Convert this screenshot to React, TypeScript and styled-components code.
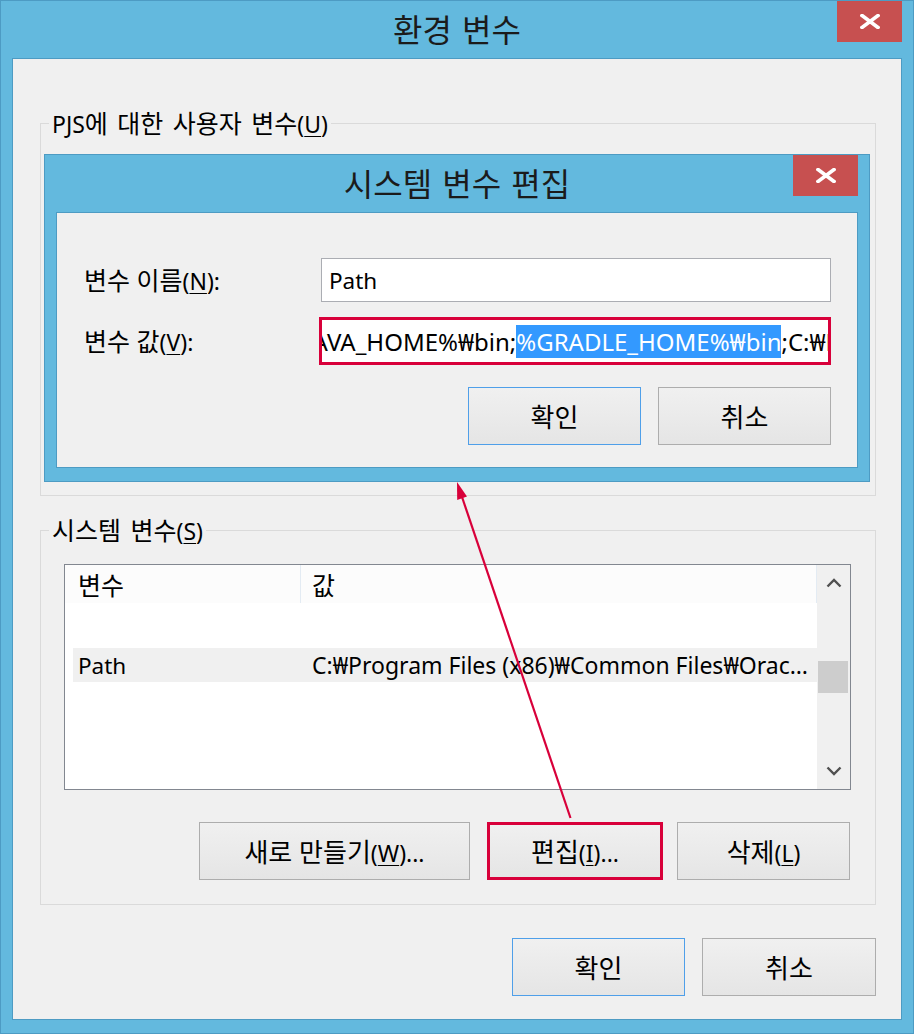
import React from "react";
import styled, { createGlobalStyle } from "styled-components";

const FONT = `"Noto Sans", "Noto Sans CJK KR", sans-serif`;
const BLUE = "#63b9de";
const EDGE = "#4d9bc3";
const RED = "#d8003a";

const GlobalStyle = createGlobalStyle`
  html, body { margin: 0; padding: 0; background: ${BLUE}; }
  body { font-family: ${FONT}; }
  *, *::before, *::after { box-sizing: border-box; }
`;

const Frame = styled.div<{ $w?: number; $h?: number }>`
  position: relative;
  display: flex;
  flex-direction: column;
  width: ${(p) => (p.$w ? `${p.$w}px` : "100%")};
  height: ${(p) => (p.$h ? `${p.$h}px` : "auto")};
  background: ${BLUE};
  border: 1px solid ${EDGE};
  font-family: ${FONT};
  color: #000;
`;

const FrameHeader = styled.div`
  flex: none;
  display: grid;
  grid-template-columns: 1fr auto 1fr;
  align-items: start;
  height: 57px;
`;

const FrameTitle = styled.div`
  grid-column: 2;
  align-self: center;
  margin-top: -4px;
  font-family: "Noto Sans CJK KR", sans-serif;
  font-size: 32px;
  line-height: 36px;
  word-spacing: 3px;
  color: #1b1b1b;
  white-space: nowrap;
`;

const CloseButton = styled.button<{ $right: number }>`
  grid-column: 3;
  justify-self: end;
  width: 65px;
  height: 41px;
  margin: 0 ${(p) => p.$right}px 0 0;
  padding: 0;
  border: none;
  background: #c75050;
  display: flex;
  align-items: center;
  justify-content: center;
`;

const FrameBody = styled.div<{ $side: number; $pad: string }>`
  flex: 1;
  margin: 0 ${(p) => p.$side}px 13px;
  border: 1px solid ${EDGE};
  background: #f0f0f0;
  padding: ${(p) => p.$pad};
  display: flex;
  flex-direction: column;
`;

const Group = styled.fieldset<{ $top?: number }>`
  margin: ${(p) => p.$top ?? 0}px 0 0;
  padding: 0;
  min-width: 0;
  border: 1px solid #dadada;
`;

const Legend = styled.legend`
  height: 24px;
  margin-left: 8px;
  padding: 0 3px;
  font-size: 25px;
  line-height: 24px;
  word-spacing: 3px;
  color: #000;
  white-space: nowrap;
`;

const Latin = styled.span<{ $size?: number }>`
  font-size: ${(p) => p.$size ?? 23}px;
`;

const GroupInner = styled.div<{ $pad: string }>`
  padding: ${(p) => p.$pad};
  display: flex;
  flex-direction: column;
`;

const Key = styled.span`
  text-decoration: underline;
  text-underline-offset: 3px;
  text-decoration-thickness: 1px;
`;

const FormGrid = styled.div`
  display: grid;
  grid-template-columns: 235px 1fr;
  grid-template-rows: 44px 48px;
  row-gap: 15px;
  align-items: center;
`;

const FieldLabel = styled.label`
  font-size: 25px;
  line-height: 28px;
  padding-top: 1px;
  white-space: nowrap;
`;

const NameInput = styled.div`
  height: 44px;
  margin-left: 2px;
  border: 1px solid #abadb3;
  background: #fff;
  padding-left: 7px;
  display: flex;
  align-items: center;
  font-size: 22.5px;
`;

const ValueInput = styled.div`
  height: 48px;
  border: 3px solid ${RED};
  background: #fff;
  overflow: hidden;
  display: flex;
  align-items: center;
  font-size: 24px;
  white-space: nowrap;
`;

const ValueText = styled.div<{ $shift: number }>`
  margin-left: ${(p) => p.$shift}px;
  flex: none;
`;

const Selected = styled.span`
  background: #3399ff;
  color: #fff;
`;

const ButtonRow = styled.div<{ $top: number; $right?: number }>`
  display: flex;
  justify-content: flex-end;
  margin-top: ${(p) => p.$top}px;
  padding-right: ${(p) => p.$right ?? 0}px;
`;

const Button = styled.button<{ $w: number; $ml?: number; $kind?: "default" | "marked" }>`
  width: ${(p) => p.$w}px;
  height: 58px;
  margin-left: ${(p) => p.$ml ?? 0}px;
  padding: 0;
  font-family: ${FONT};
  font-size: 26px;
  color: #000;
  background: linear-gradient(#f0f0f0, #e5e5e5);
  border: ${(p) =>
    p.$kind === "marked"
      ? `3px solid ${RED}`
      : p.$kind === "default"
      ? "1px solid #4f9fe9"
      : "1px solid #adadad"};
  white-space: nowrap;
`;

const ListBox = styled.div`
  height: 226px;
  border: 1px solid #828790;
  background: #fff;
  display: grid;
  grid-template-columns: 1fr 33px;
`;

const ListMain = styled.div`
  display: flex;
  flex-direction: column;
  overflow: hidden;
`;

const ListHeader = styled.div`
  display: grid;
  grid-template-columns: 235px 1fr;
  height: 38px;
  background: #fcfcfc;
  border-right: 1px solid #e3ebf3;
`;

const HeaderCell = styled.div<{ $pad: number; $divider?: boolean }>`
  display: flex;
  align-items: center;
  padding-left: ${(p) => p.$pad}px;
  border-left: ${(p) => (p.$divider ? "1px solid #e3ebf3" : "none")};
  font-size: 25px;
`;

const ListRow = styled.div`
  display: grid;
  grid-template-columns: 227px 1fr;
  height: 34px;
  margin: 45px 0 0 8px;
  background: #f0f0f0;
  align-items: center;
`;

const RowCell = styled.div<{ $pad: number; $size: number }>`
  padding-left: ${(p) => p.$pad}px;
  font-size: ${(p) => p.$size}px;
  white-space: nowrap;
  overflow: hidden;
`;

const ScrollBar = styled.div`
  background: #f0f0f0;
  display: flex;
  flex-direction: column;
`;

const ScrollArrow = styled.div`
  height: 36px;
  display: flex;
  align-items: center;
  justify-content: center;
`;

const ScrollTrack = styled.div`
  flex: 1;
`;

const Thumb = styled.div`
  height: 32px;
  margin: 60px 2px 0 1px;
  background: #cdcdcd;
`;

const ArrowLayer = styled.svg`
  position: absolute;
  top: -1px;
  left: -1px;
  pointer-events: none;
`;

const CloseX = () => (
  <svg width="20" height="15" viewBox="0 0 20 15">
    <path d="M2 1.5 L18 13.5 M18 1.5 L2 13.5" stroke="#fff" strokeWidth="3.6" strokeLinecap="square" />
  </svg>
);

const Chevron = ({ up }: { up: boolean }) => (
  <svg width="16" height="10" viewBox="0 0 16 10">
    <path
      d={up ? "M1.5 8.5 L8 2 L14.5 8.5" : "M1.5 1.5 L8 8 L14.5 1.5"}
      fill="none"
      stroke="#505050"
      strokeWidth="2.4"
    />
  </svg>
);

export default function App() {
  return (
    <>
      <GlobalStyle />
      <Frame $w={914} $h={1034}>
        <FrameHeader>
          <FrameTitle>환경 변수</FrameTitle>
          <CloseButton $right={11} aria-label="닫기">
            <CloseX />
          </CloseButton>
        </FrameHeader>
        <FrameBody $side={11} $pad="52px 25px 0 27px">
          <Group>
            <Legend>
              <Latin>PJS</Latin>에 대한 사용자 변수
              <Latin>
                (<Key>U</Key>)
              </Latin>
            </Legend>
            <GroupInner $pad="19px 5px 13px 3px">
              <Frame>
                <FrameHeader>
                  <FrameTitle>시스템 변수 편집</FrameTitle>
                  <CloseButton $right={11} aria-label="닫기">
                    <CloseX />
                  </CloseButton>
                </FrameHeader>
                <FrameBody $side={11} $pad="45px 26px 22px 27px">
                  <FormGrid>
                    <FieldLabel>
                      변수 이름
                      <Latin>
                        (<Key>N</Key>):
                      </Latin>
                    </FieldLabel>
                    <NameInput>Path</NameInput>
                    <FieldLabel>
                      변수 값
                      <Latin>
                        (<Key>V</Key>):
                      </Latin>
                    </FieldLabel>
                    <ValueInput>
                      <ValueText $shift={-16}>
                        JAVA_HOME%₩bin;
                        <Selected>%GRADLE_HOME%₩bin</Selected>
                        ;C:₩P
                      </ValueText>
                    </ValueInput>
                  </FormGrid>
                  <ButtonRow $top={22}>
                    <Button $w={173} $kind="default">확인</Button>
                    <Button $w={173} $ml={17}>취소</Button>
                  </ButtonRow>
                </FrameBody>
              </Frame>
            </GroupInner>
          </Group>
          <Group $top={22}>
            <Legend>
              시스템 변수
              <Latin>
                (<Key>S</Key>)
              </Latin>
            </Legend>
            <GroupInner $pad="22px 24px 24px 23px">
              <ListBox>
                <ListMain>
                  <ListHeader>
                    <HeaderCell $pad={13}>변수</HeaderCell>
                    <HeaderCell $pad={11} $divider>값</HeaderCell>
                  </ListHeader>
                  <ListRow>
                    <RowCell $pad={5} $size={22.5}>Path</RowCell>
                    <RowCell $pad={12} $size={23}>C:₩Program Files (x86)₩Common Files₩Orac…</RowCell>
                  </ListRow>
                </ListMain>
                <ScrollBar>
                  <ScrollArrow>
                    <Chevron up />
                  </ScrollArrow>
                  <ScrollTrack>
                    <Thumb />
                  </ScrollTrack>
                  <ScrollArrow>
                    <Chevron up={false} />
                  </ScrollArrow>
                </ScrollBar>
              </ListBox>
              <ButtonRow $top={32} $right={1}>
                <Button $w={271}>
                  새로 만들기
                  <Latin>
                    (<Key>W</Key>)...
                  </Latin>
                </Button>
                <Button $w={176} $ml={17} $kind="marked">
                  편집
                  <Latin>
                    (<Key>I</Key>)...
                  </Latin>
                </Button>
                <Button $w={173} $ml={14}>
                  삭제
                  <Latin>
                    (<Key>L</Key>)
                  </Latin>
                </Button>
              </ButtonRow>
            </GroupInner>
          </Group>
          <ButtonRow $top={33}>
            <Button $w={173} $kind="default">확인</Button>
            <Button $w={174} $ml={17}>취소</Button>
          </ButtonRow>
        </FrameBody>
        <ArrowLayer width={914} height={1034} viewBox="0 0 914 1034">
          <line x1="570.5" y1="818" x2="461" y2="494" stroke={RED} strokeWidth="2.2" />
          <polygon points="457,482 457.2,500 467,496.6" fill={RED} />
        </ArrowLayer>
      </Frame>
    </>
  );
}
